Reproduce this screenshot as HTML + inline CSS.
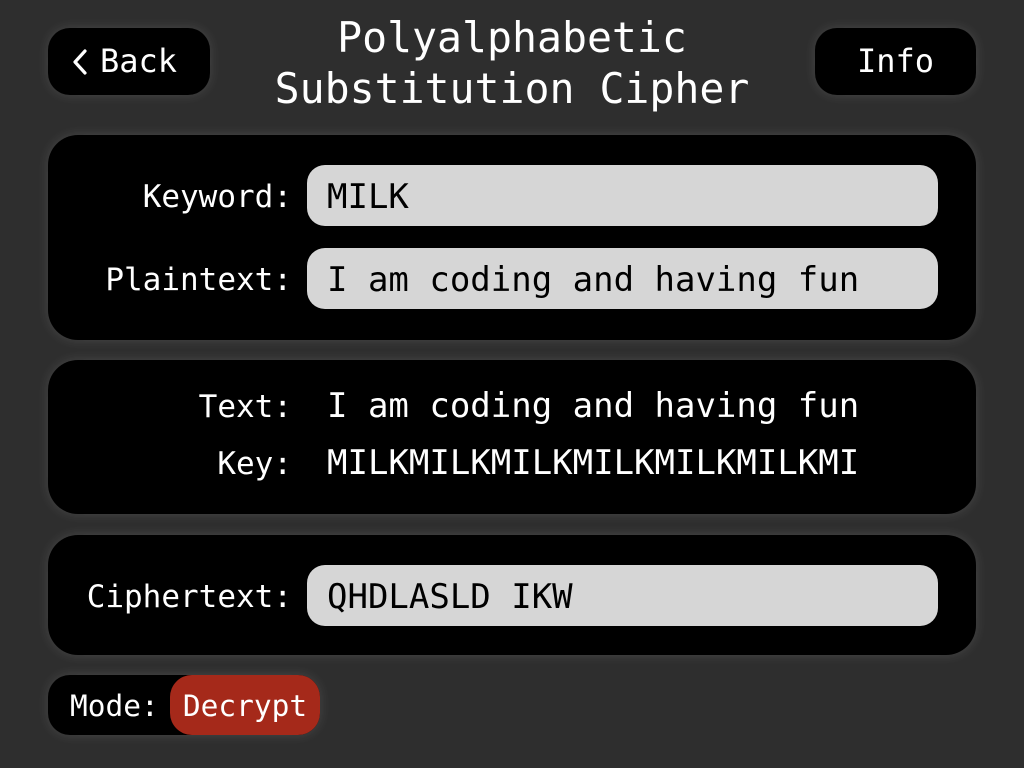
<!DOCTYPE html>
<html><head><style>
body{margin:0;width:1024px;height:768px;background:#2e2e2e;font-family:"DejaVu Sans Mono","Liberation Mono",monospace;color:#fff;position:relative;overflow:hidden}
.a{position:absolute}
.box{background:#000;box-shadow:0 0 12px rgba(255,255,255,0.12)}
.btn{border-radius:22px;font-size:32px;line-height:67px;text-align:center}
.panel{left:48px;width:928px;border-radius:30px}
.lbl{font-size:31px;text-align:right;width:292px;left:0}
.inp{left:307px;width:631px;height:61px;background:#d6d6d6;border-radius:18px;color:#000;font-size:34px;line-height:64px;padding-left:20px;box-sizing:border-box}
.t{font-size:34px}
</style></head><body>
<div class="a box btn" style="left:48px;top:28px;width:162px;height:67px"></div>
<svg class="a" style="left:70px;top:48px" width="20" height="28" viewBox="0 0 20 28"><path d="M15 3 L5 14 L15 25" fill="none" stroke="#fff" stroke-width="3.2" stroke-linecap="round" stroke-linejoin="round"/></svg>
<div class="a" style="left:100px;top:28px;font-size:32px;line-height:67px">Back</div>
<div class="a box btn" style="left:815px;top:28px;width:161px;height:67px">Info</div>
<div class="a" style="left:0;width:1024px;top:12px;text-align:center;font-size:41.5px;line-height:51px">Polyalphabetic<br>Substitution Cipher</div>

<div class="a box panel" style="top:135px;height:205px"></div>
<div class="a lbl" style="top:179px">Keyword:</div>
<div class="a inp" style="top:165px">MILK</div>
<div class="a lbl" style="top:262px">Plaintext:</div>
<div class="a inp" style="top:248px">I am coding and having fun</div>

<div class="a box panel" style="top:360px;height:154px"></div>
<div class="a lbl" style="top:389px">Text:</div>
<div class="a t" style="left:327px;top:386px">I am coding and having fun</div>
<div class="a lbl" style="top:446px">Key:</div>
<div class="a t" style="left:327px;top:443px">MILKMILKMILKMILKMILKMILKMI</div>

<div class="a box panel" style="top:535px;height:120px"></div>
<div class="a lbl" style="top:579px">Ciphertext:</div>
<div class="a inp" style="top:565px">QHDLASLD IKW</div>

<div class="a box" style="left:48px;top:675px;width:272px;height:60px;border-radius:22px"></div>
<div class="a" style="left:70px;top:689px;font-size:29.5px">Mode:</div>
<div class="a" style="left:170px;top:675px;width:150px;height:60px;border-radius:22px;background:#a5291a;font-size:29.5px;line-height:62px;text-align:center">Decrypt</div>
</body></html>
